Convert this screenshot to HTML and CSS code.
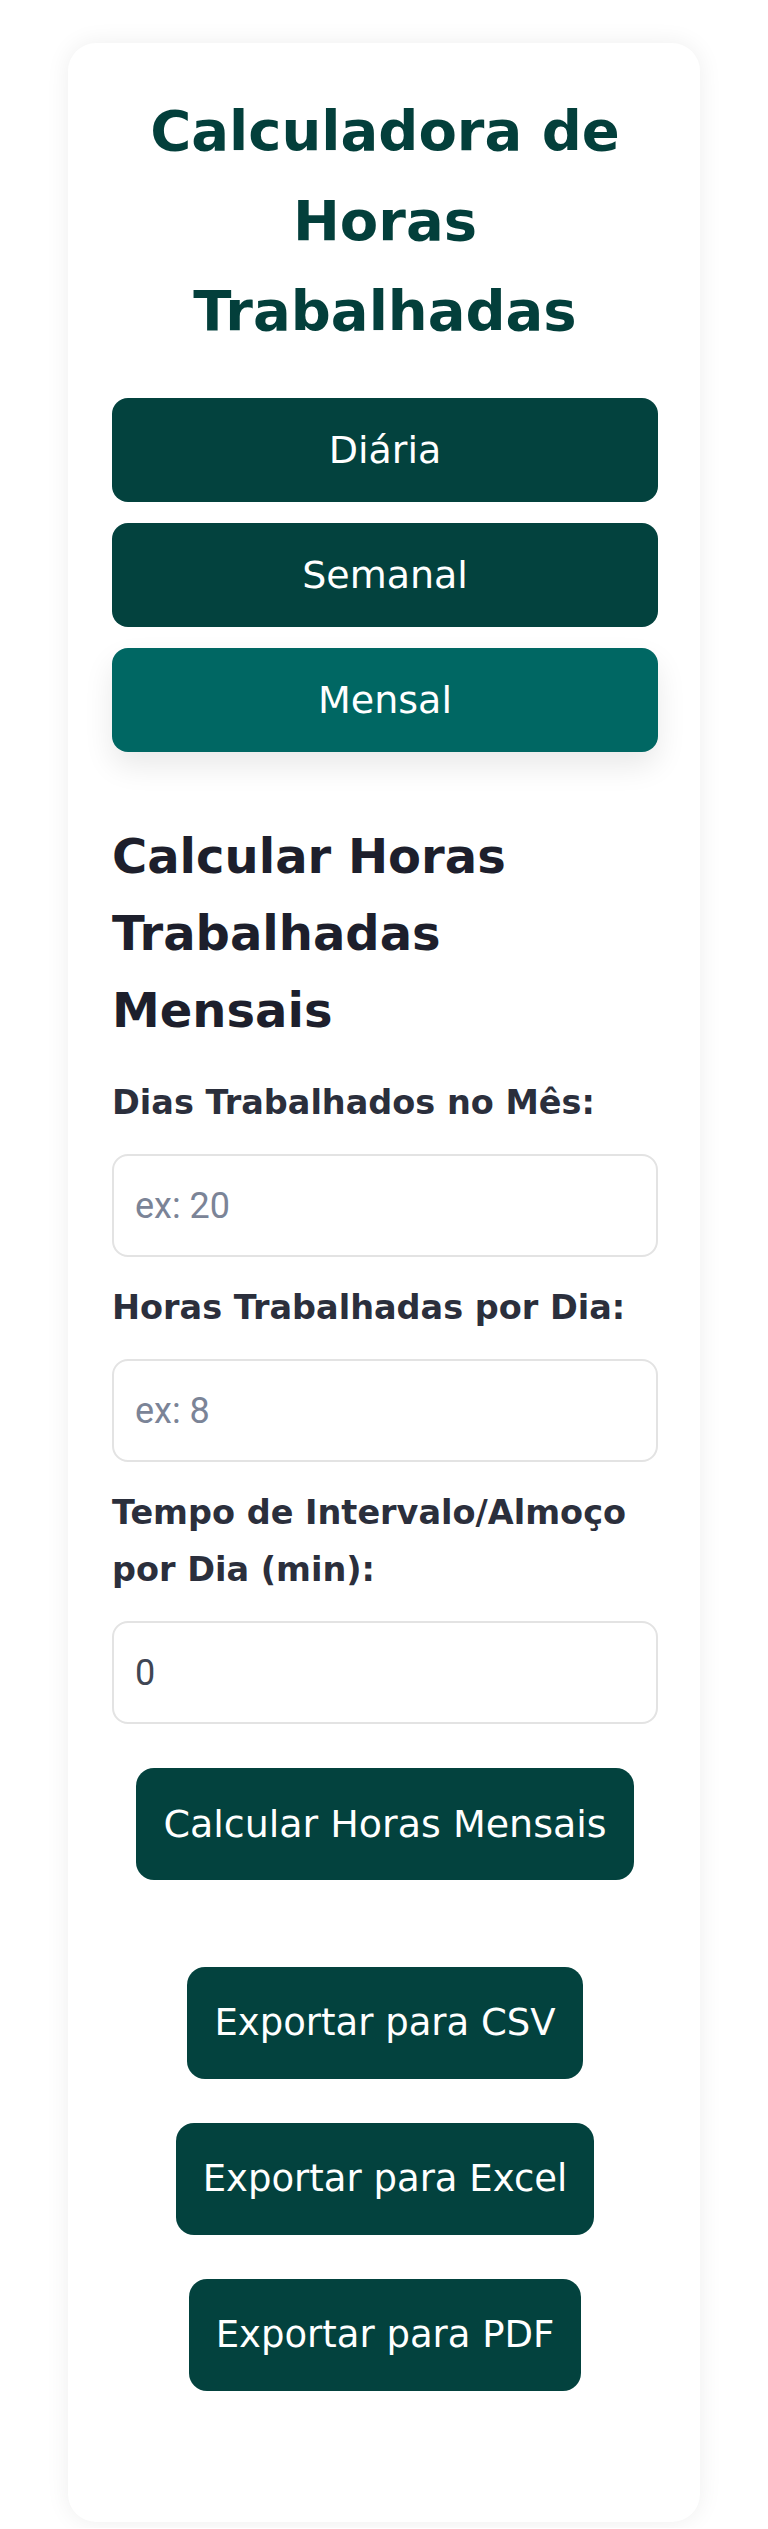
FILE: index.html
```html
<!DOCTYPE html>
<html lang="pt-BR">
<head>
    <meta charset="UTF-8">
    <meta name="viewport" content="width=device-width, initial-scale=1.0">
    <title>Calculadora de Horas Trabalhadas</title>
    <link rel="stylesheet" href="styles.css">
</head>
<body>
    <div class="container">
        <h1>Calculadora de Horas Trabalhadas</h1>

        <div class="tabs">
            <button class="tab">Diária</button>
            <button class="tab">Semanal</button>
            <button class="tab active">Mensal</button>
        </div>

        <div class="panel">
            <h2>Calcular Horas Trabalhadas Mensais</h2>

            <div class="form-group">
                <label for="dias">Dias Trabalhados no Mês:</label>
                <input type="number" id="dias" placeholder="ex: 20">
            </div>

            <div class="form-group">
                <label for="horas">Horas Trabalhadas por Dia:</label>
                <input type="number" id="horas" placeholder="ex: 8">
            </div>

            <div class="form-group">
                <label for="intervalo">Tempo de Intervalo/Almoço por Dia (min):</label>
                <input type="number" id="intervalo" value="0">
            </div>

            <button class="btn calc-btn">Calcular Horas Mensais</button>
        </div>

        <div class="exports">
            <button class="btn">Exportar para CSV</button>
            <button class="btn">Exportar para Excel</button>
            <button class="btn">Exportar para PDF</button>
        </div>
    </div>
</body>
</html>
```

FILE: styles.css
```css
* {
    box-sizing: border-box;
    margin: 0;
    padding: 0;
}
body {
    font-family: "DejaVu Sans", "Noto Sans", sans-serif;
    background: #fff;
    padding: 43px 68px 6px;
}
.container {
    background: #fff;
    border-radius: 28px;
    box-shadow: 0 0 24px rgba(0,0,0,0.07);
    padding: 43px 42px 131px 44px;
}
h1 {
    font-size: 56px;
    line-height: 90px;
    font-weight: 700;
    text-align: center;
    color: #033f3b;
}
.tabs {
    display: flex;
    flex-direction: column;
    gap: 21px;
    margin-top: 42px;
}
.tab {
    width: 100%;
    border: none;
    border-radius: 16px;
    background: #03423e;
    color: #fff;
    font-family: inherit;
    font-size: 38px;
    line-height: 60px;
    padding: 22px;
    cursor: pointer;
}
.tab.active {
    background: #006763;
    box-shadow: 0 14px 30px rgba(0,0,0,0.09);
}
h2 {
    margin-top: 66px;
    font-size: 48px;
    line-height: 77px;
    font-weight: 700;
    color: #1d1f2c;
}
.form-group {
    margin-top: 22px;
}
.form-group:first-of-type {
    margin-top: 25px;
}
label {
    display: block;
    font-size: 33.5px;
    line-height: 57px;
    font-weight: 700;
    color: #2b2f3c;
    margin-bottom: 23px;
}
input {
    display: block;
    width: 100%;
    height: 103px;
    border: 2px solid #e3e3e3;
    border-radius: 16px;
    padding: 0 21px;
    font-family: Roboto, "Liberation Sans", sans-serif;
    font-size: 36px;
    color: #3f4654;
    background: #fff;
}
input::placeholder {
    color: #7b8497;
}
input:focus {
    outline: none;
    border-color: #006763;
}
.btn {
    display: block;
    border: none;
    border-radius: 18px;
    background: #03423e;
    color: #fff;
    font-family: inherit;
    font-size: 37px;
    line-height: 60px;
    padding: 26px 27px;
    cursor: pointer;
}
.btn:hover {
    background: #006763;
}
.calc-btn {
    margin: 44px auto 0;
    font-size: 38px;
}
.exports {
    display: flex;
    flex-direction: column;
    align-items: center;
    gap: 44px;
    margin-top: 87px;
}
```
